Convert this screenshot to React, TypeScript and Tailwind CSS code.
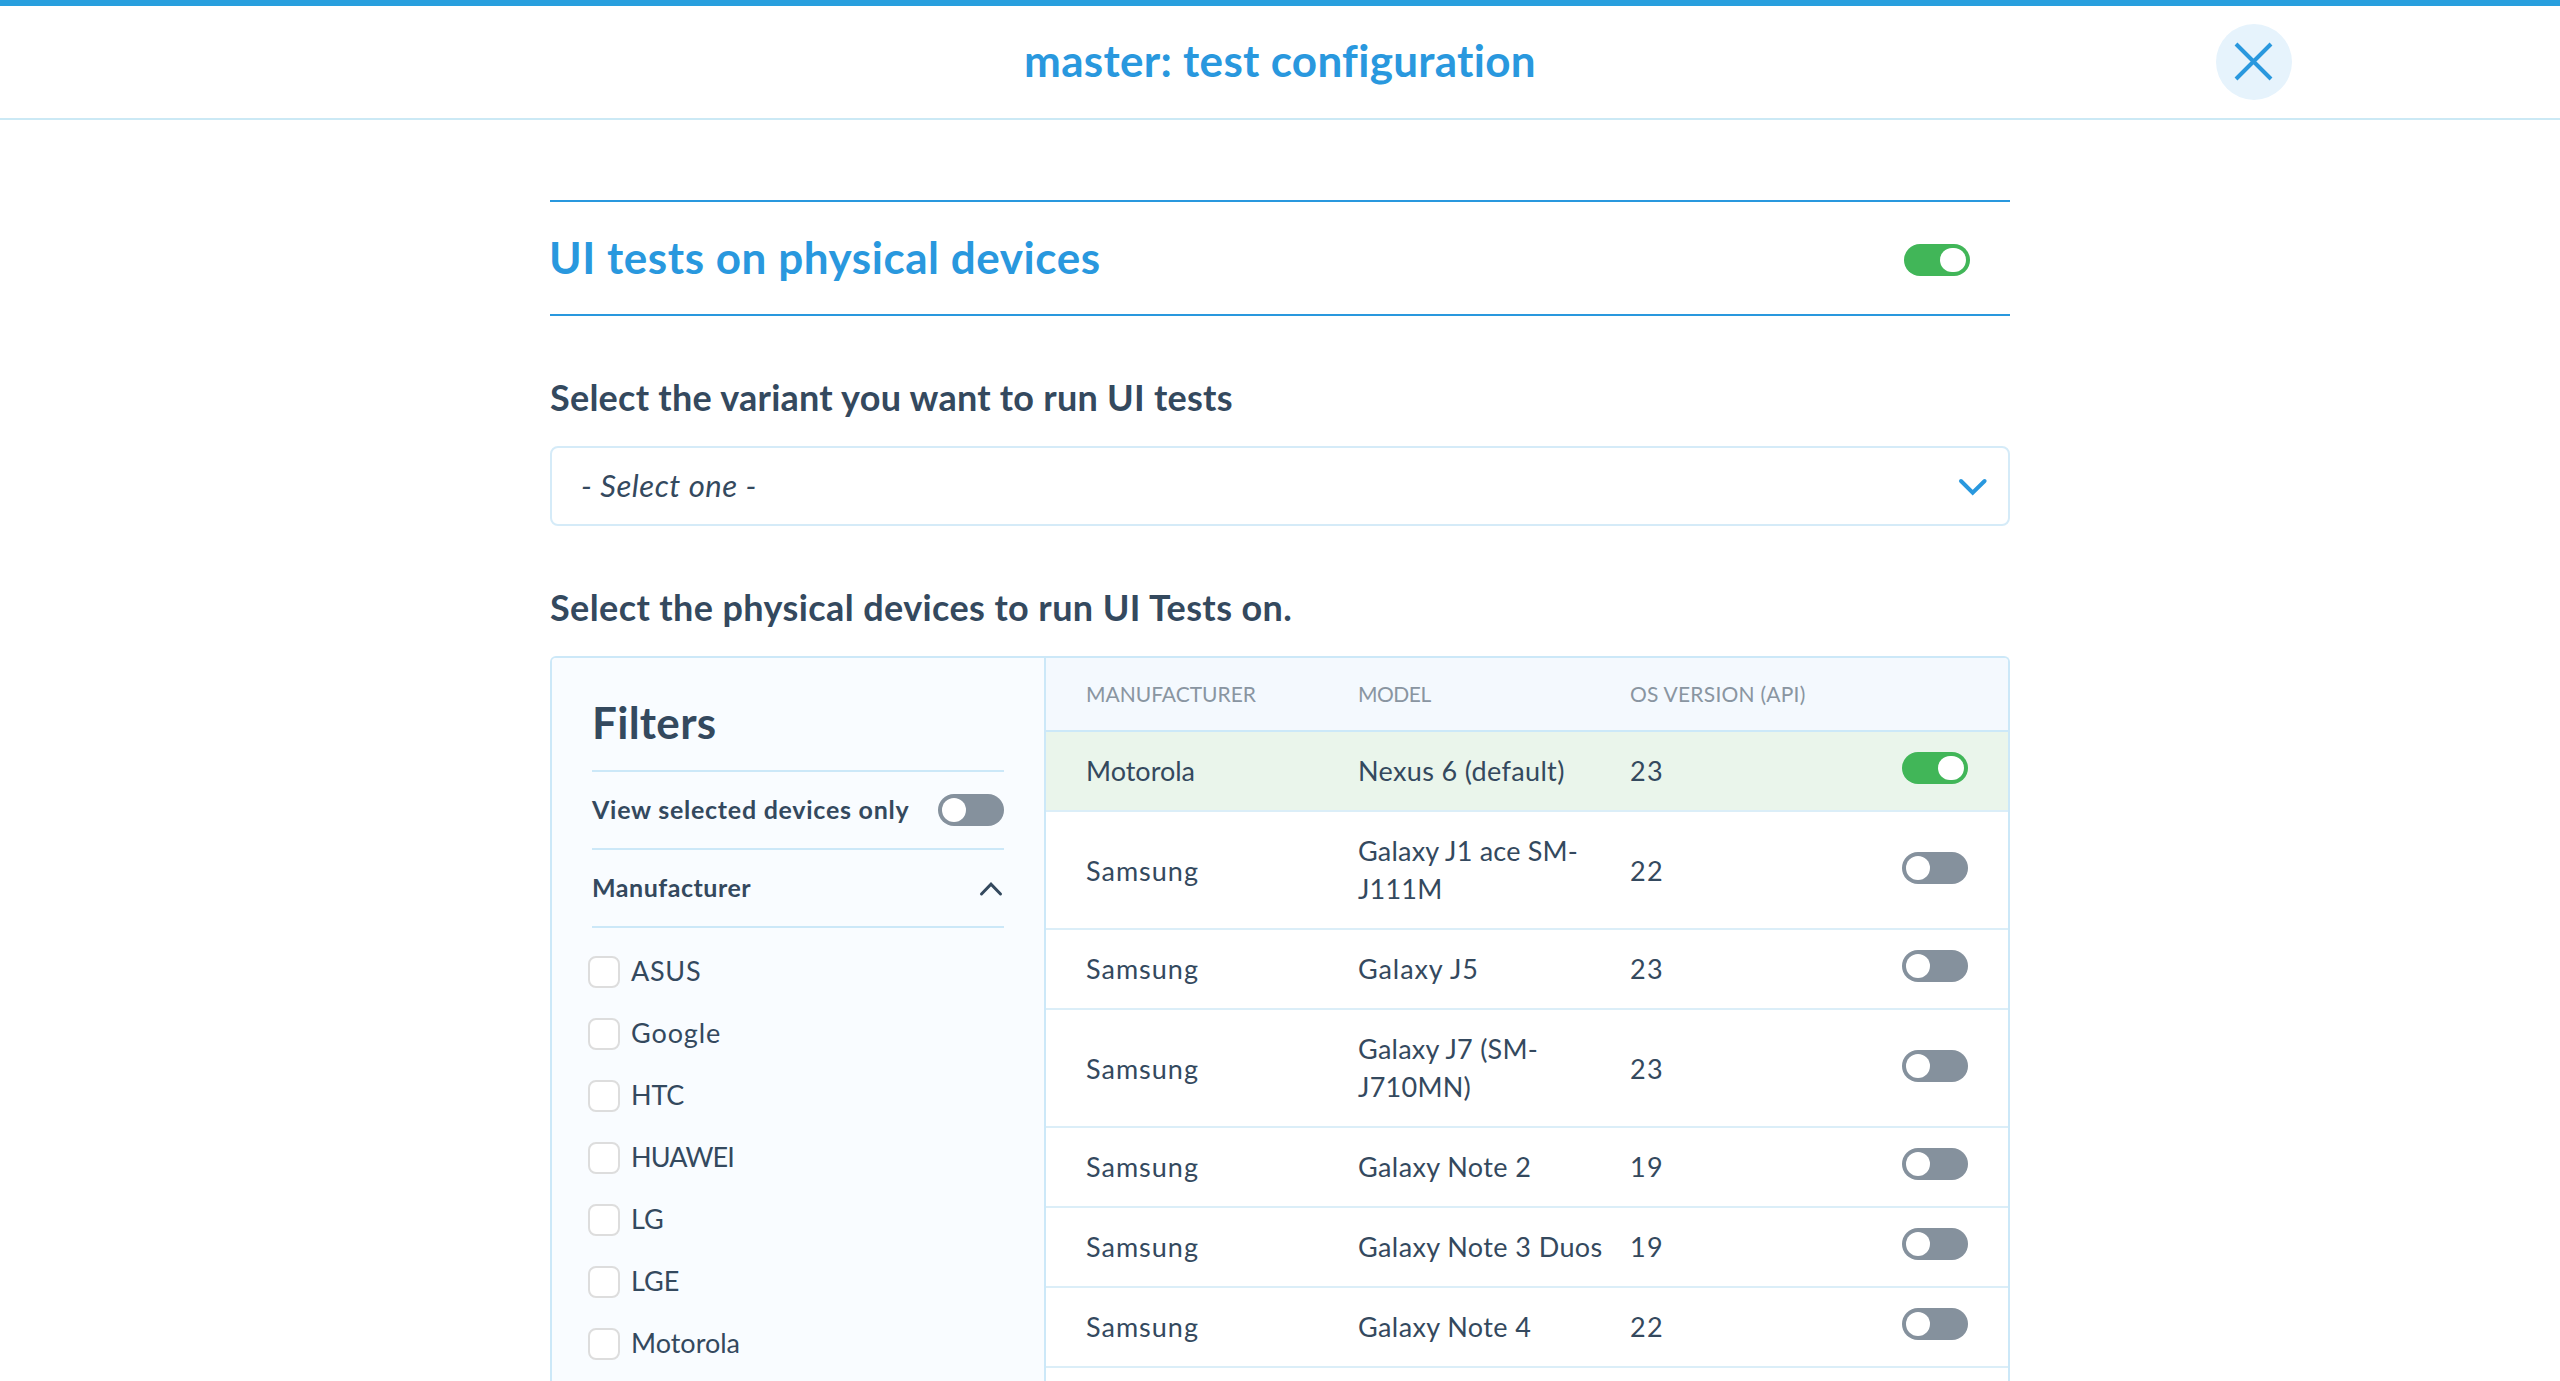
import React from 'react';

type Item = { text: string; tracking: string };

type Device = {
  manufacturer: Item;
  model: Item;
  api: string;
  selected?: boolean;
  tall?: boolean;
};

const samsung: Item = { text: 'Samsung', tracking: 'tracking-[1px]' };

const devices: Device[] = [
  {
    manufacturer: { text: 'Motorola', tracking: 'tracking-[0px]' },
    model: { text: 'Nexus 6 (default)', tracking: 'tracking-[0.35px]' },
    api: '23',
    selected: true,
  },
  {
    manufacturer: samsung,
    model: { text: 'Galaxy J1 ace SM-J111M', tracking: 'tracking-[0.2px]' },
    api: '22',
    tall: true,
  },
  { manufacturer: samsung, model: { text: 'Galaxy J5', tracking: 'tracking-[0.9px]' }, api: '23' },
  {
    manufacturer: samsung,
    model: { text: 'Galaxy J7 (SM-J710MN)', tracking: 'tracking-[0.25px]' },
    api: '23',
    tall: true,
  },
  { manufacturer: samsung, model: { text: 'Galaxy Note 2', tracking: 'tracking-[0.4px]' }, api: '19' },
  { manufacturer: samsung, model: { text: 'Galaxy Note 3 Duos', tracking: 'tracking-[0.4px]' }, api: '19' },
  { manufacturer: samsung, model: { text: 'Galaxy Note 4', tracking: 'tracking-[0.4px]' }, api: '22' },
];

const manufacturers: Item[] = [
  { text: 'ASUS', tracking: 'tracking-[0.7px]' },
  { text: 'Google', tracking: 'tracking-[0.9px]' },
  { text: 'HTC', tracking: 'tracking-[-0.2px]' },
  { text: 'HUAWEI', tracking: 'tracking-[-0.9px]' },
  { text: 'LG', tracking: 'tracking-[0px]' },
  { text: 'LGE', tracking: 'tracking-[0px]' },
  { text: 'Motorola', tracking: 'tracking-[0px]' },
];

function Toggle({ on = false }: { on?: boolean }) {
  return (
    <span
      className={
        on
          ? 'flex h-8 w-[66px] shrink-0 items-center justify-end rounded-full bg-[#41b658] px-1'
          : 'flex h-8 w-[66px] shrink-0 items-center justify-start rounded-full bg-[#85919d] px-1'
      }
    >
      <span className={on ? 'h-6 w-[26px] rounded-full bg-white' : 'size-6 rounded-full bg-white'} />
    </span>
  );
}

function Header() {
  return (
    <header className="flex h-[120px] shrink-0 items-center justify-between border-t-[6px] border-b-2 border-t-[#289fde] border-b-[#cbe9f5] px-[268px]">
      <span className="w-[76px]" />
      <h1 className="pb-[4px] text-[44px] leading-[52px] font-bold tracking-[0.3px] text-[#2998de]">
        master: test configuration
      </h1>
      <button className="flex size-[76px] items-center justify-center rounded-full bg-[#e6f3fc]">
        <svg width="40" height="40" viewBox="0 0 40 40" fill="none" stroke="#2998de" strokeWidth="4">
          <path d="M2 2L37 37M37 2L2 37" />
        </svg>
      </button>
    </header>
  );
}

function Filters() {
  return (
    <aside className="w-[494px] border-r-2 border-[#cce8f8] bg-[#f9fcff] px-10">
      <h3 className="pt-[38px] pb-[22px] text-[44px] leading-[52px] font-bold tracking-[0.3px]">
        Filters
      </h3>
      <div className="flex h-[80px] items-center justify-between border-y-2 border-[#cce8f8]">
        <span className="pb-[3px] text-[25px] leading-8 font-bold tracking-[0.74px]">View selected devices only</span>
        <Toggle />
      </div>
      <div className="flex h-[78px] items-center justify-between border-b-2 border-[#cce8f8]">
        <span className="pb-[3px] text-[25px] leading-8 font-bold tracking-[0.52px]">Manufacturer</span>
        <svg
          className="mt-px"
          width="26"
          height="16"
          viewBox="0 0 26 16"
          fill="none"
          stroke="#34495e"
          strokeWidth="3"
          strokeLinecap="round"
        >
          <path d="M3.5 13L13 3.2L22.5 13" />
        </svg>
      </div>
      <ul className="-ml-1 pt-[13px]">
        {manufacturers.map(({ text, tracking }) => (
          <li key={text} className="flex h-[62px] items-center gap-[11px]">
            <span className="size-8 shrink-0 rounded-lg border-2 border-[#dddddd] bg-white" />
            <span className={`pb-[2px] text-[27px] leading-[38px] ${tracking}`}>{text}</span>
          </li>
        ))}
      </ul>
    </aside>
  );
}

function DeviceRow({ device }: { device: Device }) {
  const { manufacturer, model, api, selected, tall } = device;
  const offset = tall ? 'mt-5' : '';
  return (
    <div
      className={`grid grid-cols-[272px_272px_272px_66px] items-start border-b-2 border-[#dbeef8] py-5 pl-10 text-[27px] leading-[38px] ${
        selected ? 'bg-[#eaf5eb]' : 'bg-white'
      }`}
    >
      <span className={`${manufacturer.tracking} ${offset}`}>{manufacturer.text}</span>
      <span className={model.tracking}>{model.text}</span>
      <span className={`tracking-[1.3px] ${offset}`}>{api}</span>
      <span className={offset}>
        <Toggle on={selected} />
      </span>
    </div>
  );
}

function DeviceTable() {
  return (
    <div className="flex-1">
      <div className="grid h-[74px] grid-cols-[272px_272px_272px_66px] items-center border-b-2 border-[#cce8f8] bg-[#f4f9fe] pl-10 text-[21px] leading-7 text-[#8995a1]">
        <span className="tracking-[0px]">MANUFACTURER</span>
        <span className="tracking-[-0.5px]">MODEL</span>
        <span className="tracking-[0.24px]">OS VERSION (API)</span>
      </div>
      {devices.map((device) => (
        <DeviceRow key={device.model.text} device={device} />
      ))}
    </div>
  );
}

export default function App() {
  return (
    <div className="flex h-[1381px] flex-col overflow-hidden bg-white font-['Lato',sans-serif] text-[#34495e]">
      <Header />
      <main className="mx-auto flex min-h-0 w-[1460px] flex-1 flex-col pt-20">
        <section className="flex h-[116px] shrink-0 items-center justify-between border-y-2 border-[#2998de] pr-10">
          <h2 className="-ml-px pb-[3px] text-[44px] leading-[52px] font-bold tracking-[0.55px] text-[#2998de]">
            UI tests on physical devices
          </h2>
          <div className="pt-1">
            <Toggle on />
          </div>
        </section>

        <h3 className="mt-[59px] text-[36px] leading-[44px] font-bold tracking-[0.25px]">
          Select the variant you want to run UI tests
        </h3>
        <div className="mt-[27px] flex h-20 shrink-0 items-center justify-between rounded-lg border-2 border-[#d5ebf8] pr-[19px] pl-[29px]">
          <span className="pb-[2px] text-[31px] leading-10 tracking-[0.55px] italic">- Select one -</span>
          <svg
            className="mt-[2px]"
            width="32"
            height="20"
            viewBox="0 0 32 20"
            fill="none"
            stroke="#2998de"
            strokeWidth="4"
            strokeLinecap="round"
          >
            <path d="M4 4L15.7 15.6L27.6 4" />
          </svg>
        </div>

        <h3 className="mt-[59px] text-[36px] leading-[44px] font-bold tracking-[0.39px]">
          Select the physical devices to run UI Tests on.
        </h3>
        <div className="mt-[27px] flex min-h-0 flex-1 overflow-hidden rounded-t-md border-2 border-b-0 border-[#cce8f8]">
          <Filters />
          <DeviceTable />
        </div>
      </main>
    </div>
  );
}
